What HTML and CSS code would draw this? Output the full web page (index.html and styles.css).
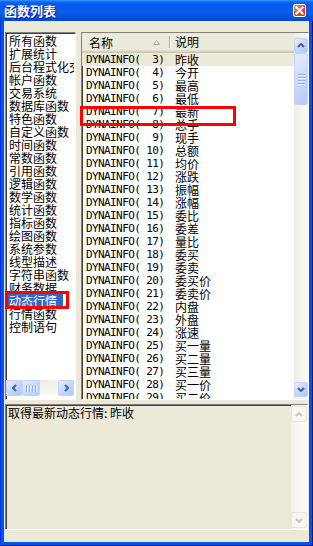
FILE: index.html
```html
<!DOCTYPE html>
<html lang="zh-CN">
<head>
    <meta charset="UTF-8">
    <meta name="viewport" content="width=device-width, initial-scale=1.0">
    <title>函数列表</title>
    <link rel="stylesheet" href="styles.css">
</head>
<body>
    <div class="window">

        <div class="titlebar">
            <span class="title">函数列表</span>
            <span class="close">
                <svg width="9" height="9" viewBox="0 0 9 9"><path d="M1.5 1.5 L7.5 7.5 M7.5 1.5 L1.5 7.5" stroke="#fff" stroke-width="2" stroke-linecap="square"/></svg>
            </span>
        </div>

        <div class="frame">
            <section class="top">

                <div class="cats-box">
                    <ul class="cats">
                        <li>所有函数</li>
                        <li>扩展统计</li>
                        <li>后台程式化交易函数</li>
                        <li>帐户函数</li>
                        <li>交易系统</li>
                        <li>数据库函数</li>
                        <li>特色函数</li>
                        <li>自定义函数</li>
                        <li>时间函数</li>
                        <li>常数函数</li>
                        <li>引用函数</li>
                        <li>逻辑函数</li>
                        <li>数学函数</li>
                        <li>统计函数</li>
                        <li>指标函数</li>
                        <li>绘图函数</li>
                        <li>系统参数</li>
                        <li>线型描述</li>
                        <li>字符串函数</li>
                        <li>财务数据</li>
                        <li class="sel">动态行情</li>
                        <li>行情函数</li>
                        <li>控制语句</li>
                    </ul>
                    <div class="hscroll">
                        <span class="sb-btn"><svg width="5" height="8" viewBox="0 0 5 8"><path d="M4 1 L1 4 L4 7" fill="none" stroke="#4d6185" stroke-width="2"/></svg></span>
                        <span class="sb-thumb h"><i></i><i></i><i></i><i></i></span>
                        <span class="sb-track"></span>
                        <span class="sb-btn"><svg width="5" height="8" viewBox="0 0 5 8"><path d="M1 1 L4 4 L1 7" fill="none" stroke="#4d6185" stroke-width="2"/></svg></span>
                    </div>
                </div>

                <div class="lv">
                    <div class="lv-main">
                        <div class="lv-head">
                            <div class="hcol c1">
                                <span>名称</span>
                                <svg class="sort" width="7" height="5" viewBox="0 0 7 5"><path d="M0.5 4.5 L3.5 0.5 L6.5 4.5 Z" fill="none" stroke="#aca899"/></svg>
                            </div>
                            <div class="hcol c2">说明</div>
                        </div>
                        <div class="lv-rows">
                            <div class="row cur"><span class="fn">DYNAINFO(  3)</span><span class="ds">昨收</span></div>
                            <div class="row"><span class="fn">DYNAINFO(  4)</span><span class="ds">今开</span></div>
                            <div class="row"><span class="fn">DYNAINFO(  5)</span><span class="ds">最高</span></div>
                            <div class="row"><span class="fn">DYNAINFO(  6)</span><span class="ds">最低</span></div>
                            <div class="row mark"><span class="fn">DYNAINFO(  7)</span><span class="ds">最新</span></div>
                            <div class="row"><span class="fn">DYNAINFO(  8)</span><span class="ds">总手</span></div>
                            <div class="row"><span class="fn">DYNAINFO(  9)</span><span class="ds">现手</span></div>
                            <div class="row"><span class="fn">DYNAINFO( 10)</span><span class="ds">总额</span></div>
                            <div class="row"><span class="fn">DYNAINFO( 11)</span><span class="ds">均价</span></div>
                            <div class="row"><span class="fn">DYNAINFO( 12)</span><span class="ds">涨跌</span></div>
                            <div class="row"><span class="fn">DYNAINFO( 13)</span><span class="ds">振幅</span></div>
                            <div class="row"><span class="fn">DYNAINFO( 14)</span><span class="ds">涨幅</span></div>
                            <div class="row"><span class="fn">DYNAINFO( 15)</span><span class="ds">委比</span></div>
                            <div class="row"><span class="fn">DYNAINFO( 16)</span><span class="ds">委差</span></div>
                            <div class="row"><span class="fn">DYNAINFO( 17)</span><span class="ds">量比</span></div>
                            <div class="row"><span class="fn">DYNAINFO( 18)</span><span class="ds">委买</span></div>
                            <div class="row"><span class="fn">DYNAINFO( 19)</span><span class="ds">委卖</span></div>
                            <div class="row"><span class="fn">DYNAINFO( 20)</span><span class="ds">委买价</span></div>
                            <div class="row"><span class="fn">DYNAINFO( 21)</span><span class="ds">委卖价</span></div>
                            <div class="row"><span class="fn">DYNAINFO( 22)</span><span class="ds">内盘</span></div>
                            <div class="row"><span class="fn">DYNAINFO( 23)</span><span class="ds">外盘</span></div>
                            <div class="row"><span class="fn">DYNAINFO( 24)</span><span class="ds">涨速</span></div>
                            <div class="row"><span class="fn">DYNAINFO( 25)</span><span class="ds">买一量</span></div>
                            <div class="row"><span class="fn">DYNAINFO( 26)</span><span class="ds">买二量</span></div>
                            <div class="row"><span class="fn">DYNAINFO( 27)</span><span class="ds">买三量</span></div>
                            <div class="row"><span class="fn">DYNAINFO( 28)</span><span class="ds">买一价</span></div>
                            <div class="row"><span class="fn">DYNAINFO( 29)</span><span class="ds">买二价</span></div>
                        </div>
                    </div>
                    <div class="vscroll">
                        <span class="sb-btn"><svg width="8" height="5" viewBox="0 0 8 5"><path d="M1 4 L4 1 L7 4" fill="none" stroke="#4d6185" stroke-width="2"/></svg></span>
                        <span class="sb-thumb v"><i></i><i></i><i></i><i></i></span>
                        <span class="sb-track"></span>
                        <span class="sb-btn"><svg width="8" height="5" viewBox="0 0 8 5"><path d="M1 1 L4 4 L7 1" fill="none" stroke="#4d6185" stroke-width="2"/></svg></span>
                    </div>
                </div>

            </section>

            <section class="desc">
                <div class="desc-text">取得最新动态行情: 昨收</div>
                <div class="vscroll off">
                    <span class="sb-btn"><svg width="8" height="5" viewBox="0 0 8 5"><path d="M1 4 L4 1 L7 4" fill="none" stroke="#c9c7ba" stroke-width="2"/></svg></span>
                    <span class="sb-track"></span>
                    <span class="sb-btn"><svg width="8" height="5" viewBox="0 0 8 5"><path d="M1 1 L4 4 L7 1" fill="none" stroke="#c9c7ba" stroke-width="2"/></svg></span>
                </div>
            </section>
        </div>

    </div>
</body>
</html>
```
FILE: styles.css
```css
* {
    box-sizing: border-box;
    margin: 0;
    padding: 0;
}

body {
    width: 313px;
    height: 546px;
    overflow: hidden;
    font-family: "Noto Sans CJK SC", "Noto Sans", sans-serif;
    font-size: 12px;
    color: #000;
}

.window {
    height: 546px;
    display: flex;
    flex-direction: column;
    background: #0055ea;
    box-shadow: inset 1px 0 #0831d9, inset -1px 0 #00138c, inset 0 -1px #00138c;
}

/* barra de titulo */
.titlebar {
    height: 21px;
    flex: none;
    display: flex;
    align-items: center;
    justify-content: space-between;
    padding: 0 7px 0 4px;
    color: #fff;
    background: linear-gradient(#3d95ff 0, #0a66f2 2px, #0058ee 5px, #0a5ee8 12px, #0052e0 17px, #0046d4 21px);
}

.title {
    font-size: 13px;
    font-weight: bold;
    line-height: 21px;
    text-shadow: 1px 1px #0a1a8c;
}

.close {
    width: 13px;
    height: 13px;
    display: grid;
    place-items: center;
    border: 1px solid #fff;
    border-radius: 2px;
    background: linear-gradient(135deg, #f3a184, #e2562f 45%, #c73b13);
}

.frame {
    flex: 1;
    margin: 0 4px 4px;
    padding: 11px 0 12px 1px;
    display: flex;
    flex-direction: column;
    gap: 4px;
    background: #ece9d8;
}

.top {
    height: 368px;
    display: flex;
    gap: 5px;
}

/* lista de categorias */
.cats-box {
    width: 71px;
    display: flex;
    flex-direction: column;
    background: #fff;
    border: 1px solid;
    border-color: #808080 #fff #fff #808080;
    box-shadow: inset 1px 1px #404040;
}

.cats {
    flex: 1;
    list-style: none;
    padding: 1px 0 0 2px;
}

.cats li {
    width: 66px;
    height: 13px;
    line-height: 13px;
    padding-left: 1px;
    white-space: nowrap;
    overflow-x: clip;
}

.cats li.sel {
    width: 55px;
    overflow: visible;
    position: relative;
    color: #fff;
    background: #316ac5;
}

.cats li.sel::after {
    content: "";
    position: absolute;
    left: -3px;
    top: -3px;
    right: -6px;
    bottom: -2px;
    border: 3px solid #f00;
}

/* barras de rolagem */
.hscroll {
    height: 16px;
    flex: none;
    display: flex;
    margin: 0 1px 3px 0;
    background: linear-gradient(#eeede5, #fbfbf8);
}

.sb-btn {
    flex: none;
    display: grid;
    place-items: center;
    border: 1px solid #c3d3fd;
    border-radius: 2px;
    background: linear-gradient(135deg, #e6eefc, #c1d3fb 60%, #b4c8f6);
}

.hscroll .sb-btn {
    width: 16px;
}

.sb-track {
    flex: 1;
}

.sb-thumb {
    flex: none;
    display: flex;
    align-items: center;
    justify-content: center;
    gap: 1px;
    border: 1px solid #c3d3fd;
    border-radius: 2px;
    background: linear-gradient(135deg, #e6eefc, #c5d6fc 60%, #b8cbf7);
}

.sb-thumb.h {
    width: 18px;
}

.sb-thumb.h i {
    width: 1px;
    height: 7px;
    background: #8cb0f8;
    box-shadow: 1px 0 #eef4fe;
    margin-right: 1px;
}

.sb-thumb.v {
    height: 52px;
    flex-direction: column;
}

.sb-thumb.v i {
    width: 7px;
    height: 1px;
    background: #8cb0f8;
    box-shadow: 0 1px #eef4fe;
    margin-bottom: 1px;
}

.vscroll {
    width: 14px;
    flex: none;
    display: flex;
    flex-direction: column;
    padding: 5px 0 2px;
    background: linear-gradient(90deg, #eeede5, #fbfbf8);
}

.vscroll .sb-btn {
    height: 15px;
}

/* lista de funcoes */
.lv {
    flex: 1;
    display: flex;
    background: #fff;
    border: 1px solid;
    border-color: #808080 #fff #fff #808080;
    box-shadow: inset 1px 1px #404040;
}

.lv-main {
    flex: 1;
    min-width: 0;
    display: flex;
    flex-direction: column;
}

.lv-head {
    height: 20px;
    flex: none;
    display: flex;
    background: #ebeadb;
    box-shadow: inset 0 -1px #cbc7b8, inset 0 -2px #d6d2c2, inset 0 -3px #e2decd;
}

.hcol {
    line-height: 17px;
}

.hcol.c1 {
    width: 88px;
    display: flex;
    align-items: center;
    justify-content: space-between;
    padding: 0 10px 2px 7px;
    position: relative;
}

.hcol.c1::after {
    content: "";
    position: absolute;
    right: 0;
    top: 3px;
    bottom: 5px;
    width: 1px;
    background: #aca899;
    box-shadow: 1px 0 #fff;
}

.hcol.c2 {
    padding-left: 5px;
}

.lv-rows {
    flex: 1;
    min-height: 0;
    clip-path: inset(0 -4px 0 -4px);
}

.row {
    height: 13px;
    line-height: 13px;
    display: flex;
    white-space: nowrap;
}

.row.cur {
    background: #ece9d8;
}

.row.mark {
    position: relative;
}

.row.mark::after {
    content: "";
    position: absolute;
    left: -2px;
    top: 1px;
    width: 150px;
    height: 14px;
    border: 3px solid #f00;
}

.fn {
    width: 89px;
    padding-left: 4px;
    white-space: pre;
    font-family: "DejaVu Sans Mono", "Liberation Mono", monospace;
    font-size: 11px;
    letter-spacing: -0.6px;
}

.ds {
    padding-left: 4px;
}

/* descricao */
.desc {
    height: 126px;
    margin-right: 1px;
    display: flex;
    border: 1px solid;
    border-color: #808080 #fff #fff #808080;
    box-shadow: inset 1px 1px #404040;
    background: #ece9d8;
}

.desc-text {
    flex: 1;
    padding: 1px 0 0 2px;
    line-height: 13px;
}

.vscroll.off {
    width: 16px;
    padding: 1px 0;
    background: linear-gradient(90deg, #f3f1ea, #fdfdfb);
}

.vscroll.off .sb-btn {
    height: 16px;
    border-color: #e8e6dd;
    background: #f7f6f1;
}
```
